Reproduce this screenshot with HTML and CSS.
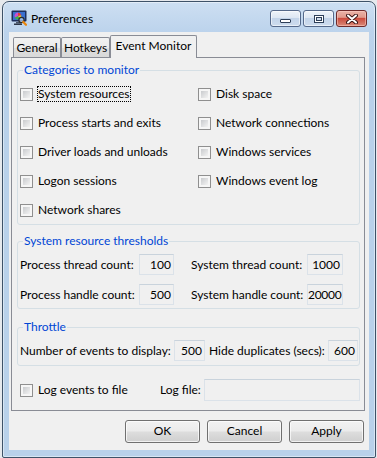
FILE: index.html
```html
<!DOCTYPE html>
<html>
<head>
<meta charset="utf-8">
<title>Preferences</title>
<link rel="stylesheet" href="styles.css">
</head>
<body>
<div class="window">
  <div class="titlebar">
    <svg class="app-icon" width="16" height="16" viewBox="0 0 16 16">
      <rect x="0.5" y="0.5" width="15" height="11" rx="1" fill="#1d2f5c"/>
      <rect x="2" y="2" width="12" height="8" fill="#3a6fcf"/>
      <path d="M7 6 L7 2.6 A3.4 3.4 0 0 1 10.3 5.2 Z" fill="#e53b3b"/>
      <path d="M7 6 L10.3 5.2 A3.4 3.4 0 0 1 8.6 9 Z" fill="#f2c81a"/>
      <path d="M7 6 L8.6 9 A3.4 3.4 0 0 1 3.8 7.4 Z" fill="#3fb34a"/>
      <path d="M7 6 L3.8 7.4 A3.4 3.4 0 0 1 7 2.6 Z" fill="#c94fd0"/>
      <rect x="5" y="12" width="5" height="1.5" fill="#4a5568"/>
      <rect x="3" y="13.5" width="8" height="1.5" fill="#2d3748"/>
      <circle cx="10.5" cy="10" r="2.6" fill="#d9ecff" fill-opacity="0.6" stroke="#2b2b2b" stroke-width="1.2"/>
      <path d="M12.3 11.9 L15 14.8" stroke="#e8850c" stroke-width="2.2" stroke-linecap="round"/>
    </svg>
    <span class="title">Preferences</span>
    <div class="caption-buttons">
      <div class="cap-btn"><span class="min-glyph"></span></div>
      <div class="cap-btn"><span class="max-glyph"><span class="max-inner"></span></span></div>
      <div class="cap-btn close">
        <svg width="12" height="10" viewBox="0 0 12 10">
          <path d="M2 1.5 L10 8.5 M10 1.5 L2 8.5" stroke="#3b1515" stroke-width="4" stroke-linecap="round"/>
          <path d="M2 1.5 L10 8.5 M10 1.5 L2 8.5" stroke="#ffffff" stroke-width="2" stroke-linecap="round"/>
        </svg>
      </div>
    </div>
  </div>

  <div class="client">
    <div class="tabs">
      <div class="tab tab-general">General</div>
      <div class="tab tab-hotkeys">Hotkeys</div>
      <div class="tab tab-event selected">Event Monitor</div>
    </div>

    <div class="panel">
      <fieldset class="group group-cats">
        <legend>Categories to monitor</legend>
        <div class="cats">
          <div class="check"><span class="box"></span><span class="label focus">System resources</span></div>
          <div class="check"><span class="box"></span><span class="label">Disk space</span></div>
          <div class="check"><span class="box"></span><span class="label">Process starts and exits</span></div>
          <div class="check"><span class="box"></span><span class="label">Network connections</span></div>
          <div class="check"><span class="box"></span><span class="label">Driver loads and unloads</span></div>
          <div class="check"><span class="box"></span><span class="label">Windows services</span></div>
          <div class="check"><span class="box"></span><span class="label">Logon sessions</span></div>
          <div class="check"><span class="box"></span><span class="label">Windows event log</span></div>
          <div class="check"><span class="box"></span><span class="label">Network shares</span></div>
        </div>
      </fieldset>

      <fieldset class="group group-thresh">
        <legend>System resource thresholds</legend>
        <div class="thresh">
          <span class="flabel">Process thread count:</span>
          <div class="edit">100</div>
          <span class="flabel second">System thread count:</span>
          <div class="edit">1000</div>
          <span class="flabel">Process handle count:</span>
          <div class="edit">500</div>
          <span class="flabel second">System handle count:</span>
          <div class="edit tight">20000</div>
        </div>
      </fieldset>

      <fieldset class="group group-throttle">
        <legend>Throttle</legend>
        <div class="throttle">
          <span class="flabel">Number of events to display:</span>
          <div class="edit">500</div>
          <span class="flabel third">Hide duplicates (secs):</span>
          <div class="edit">600</div>
        </div>
      </fieldset>

      <div class="logrow">
        <div class="check"><span class="box"></span><span class="label">Log events to file</span></div>
        <span class="flabel">Log file:</span>
        <div class="edit wide"></div>
      </div>
    </div>

    <div class="buttons">
      <div class="btn">OK</div>
      <div class="btn">Cancel</div>
      <div class="btn">Apply</div>
    </div>
  </div>
</div>
</body>
</html>
```

FILE: styles.css
```css
html, body {
  margin: 0;
  padding: 0;
}
body {
  background: #e6e9ed;
  font-family: Lato, "Liberation Sans", sans-serif;
  font-size: 12px;
  color: #000;
  overflow: hidden;
}

.window {
  margin: 1px 0 0 2px;
  width: 374px;
  height: 457px;
  box-sizing: border-box;
  border: 1px solid #3e5268;
  border-radius: 7px 7px 2px 2px;
  background: linear-gradient(#cddff2 0px, #bcd3ec 30px, #b9d1ea 60px);
  box-shadow: inset 0 0 0 1px rgba(255, 255, 255, 0.45);
  padding: 0 6px 7px;
  display: flex;
  flex-direction: column;
}

/* Title bar */
.titlebar {
  height: 30px;
  display: flex;
  align-items: flex-start;
}
.app-icon {
  margin: 8px 0 0 2px;
  flex: none;
}
.title {
  margin: 9px 0 0 4px;
  font-size: 12px;
  line-height: 16px;
  color: #000;
}
.caption-buttons {
  margin: 8px 2px 0 auto;
  display: flex;
  gap: 2px;
}
.cap-btn {
  width: 31px;
  height: 17px;
  box-sizing: border-box;
  border: 1px solid #55698a;
  border-radius: 3px;
  background: linear-gradient(#eef3f9 0%, #dde7f3 45%, #c3d4e9 50%, #cddcee 100%);
  box-shadow: inset 0 0 0 1px rgba(255, 255, 255, 0.55);
  display: flex;
  align-items: center;
  justify-content: center;
}
.cap-btn.close {
  border-color: #6e2a2a;
  background: linear-gradient(#eab3a8 0%, #e19a8c 42%, #cd4c3e 50%, #d16b5b 75%, #dc8a79 100%);
  box-shadow: inset 0 0 0 1px rgba(255, 210, 200, 0.5);
}
.min-glyph {
  width: 11px;
  height: 4px;
  box-sizing: border-box;
  border: 1px solid #2e3f58;
  border-radius: 1px;
  background: #fff;
  margin-top: 5px;
}
.max-glyph {
  width: 10px;
  height: 8px;
  box-sizing: border-box;
  border: 1px solid #2e3f58;
  border-top-width: 1px;
  background: #fff;
  display: flex;
  align-items: center;
  justify-content: center;
  padding-top: 1px;
}
.max-inner {
  width: 4px;
  height: 2px;
  border: 1px solid #2e3f58;
  background: #cfdcec;
}

/* Client area */
.client {
  height: 418px;
  background: #f0f0f0;
  display: flex;
  flex-direction: column;
}

.tabs {
  height: 25px;
  padding-left: 4px;
  display: flex;
  align-items: flex-end;
  box-sizing: border-box;
}
.tab {
  height: 20px;
  box-sizing: border-box;
  border: 1px solid #898c95;
  border-bottom: 0;
  border-radius: 2px 2px 0 0;
  background: linear-gradient(#f2f2f2 0%, #ebebeb 50%, #dfdfdf 51%, #d9d9d9 100%);
  text-align: center;
  line-height: 18px;
  padding-top: 1px;
  white-space: nowrap;
}
.tab-general { width: 48px; }
.tab-hotkeys { width: 49px; }
.tab-event { width: 87px; }
.tab.selected {
  height: 23px;
  margin-bottom: -1px;
  position: relative;
  z-index: 1;
  background: #f0f0f0;
  line-height: 18px;
  padding-top: 1px;
}

.panel {
  margin-left: 2px;
  width: 354px;
  height: 354px;
  box-sizing: border-box;
  border: 1px solid #898c95;
  background: #f0f0f0;
  display: flex;
  flex-direction: column;
}

.group {
  margin: 0 0 0 5px;
  padding: 0;
  width: 343px;
  box-sizing: border-box;
  min-inline-size: 0;
  border: 1px solid #d5dfe5;
  border-radius: 3px;
}
.group legend {
  margin-left: 5px;
  padding: 0 1px;
  line-height: 16px;
  color: #0046d5;
}
.group-cats { margin-top: 4px; }
.group-thresh { margin-top: 8px; }
.group-throttle { margin-top: 10px; }

.cats {
  display: grid;
  grid-template-columns: 178px 1fr;
  row-gap: 13px;
  padding: 8px 0 6px 2px;
}
.check {
  display: flex;
  align-items: center;
  height: 16px;
  gap: 4px;
  white-space: nowrap;
}
.box {
  flex: none;
  width: 13px;
  height: 13px;
  box-sizing: border-box;
  border: 1px solid #8f8f8f;
  padding: 2px;
  background: linear-gradient(135deg, #c9cbce, #f3f3f3) content-box, #f6f6f6;
}
.label {
  line-height: 14px;
  border: 1px solid transparent;
  padding: 0 1px 0 0;
}
.label.focus {
  border: 1px dotted #000;
}

.flabel {
  white-space: nowrap;
  line-height: 16px;
}

.edit {
  height: 21px;
  box-sizing: border-box;
  border: 1px solid #dbe2e9;
  border-top-color: #c9d3dc;
  background: #f0f0f0;
  text-align: right;
  padding-right: 2px;
  line-height: 19px;
  white-space: nowrap;
  overflow: hidden;
}
.edit.tight {
  padding-right: 1px;
  letter-spacing: -0.3px;
}

.thresh {
  display: grid;
  grid-template-columns: 119px 35px 133px 36px;
  row-gap: 9px;
  align-items: center;
  padding: 5px 0 3px 2px;
}
.flabel.second { padding-left: 17px; }

.throttle {
  display: grid;
  grid-template-columns: 154px 31px 123px 30px;
  align-items: center;
  padding: 5px 0 4px 2px;
}
.flabel.third { padding-left: 4px; }

.logrow {
  margin-top: 13px;
  padding-left: 8px;
  height: 22px;
  display: grid;
  grid-template-columns: 140px 44px 156px;
  align-items: center;
}
.edit.wide { height: 22px; }

.buttons {
  margin-top: 9px;
  padding-right: 5px;
  display: flex;
  justify-content: flex-end;
  gap: 7px;
}
.btn {
  width: 75px;
  height: 23px;
  box-sizing: border-box;
  border: 1px solid #707070;
  border-radius: 3px;
  background: linear-gradient(#f2f2f2 0%, #ebebeb 48%, #dddddd 52%, #cfcfcf 100%);
  box-shadow: inset 0 0 0 1px rgba(255, 255, 255, 0.7);
  text-align: center;
  line-height: 20px;
}
```
